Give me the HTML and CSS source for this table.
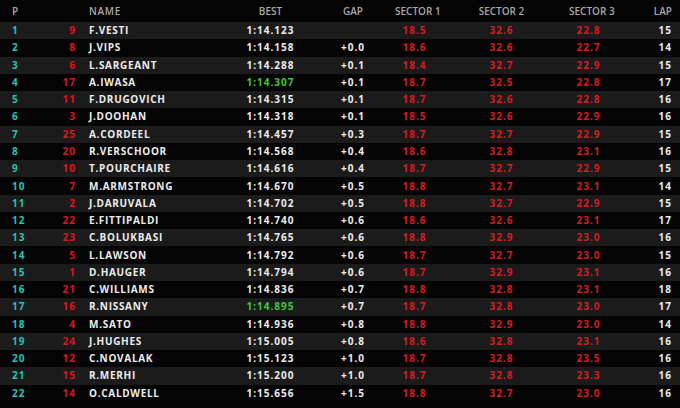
FILE: index.html
```html
<!DOCTYPE html>
<html>
<head>
<meta charset="utf-8">
<link rel="stylesheet" href="styles.css">
</head>
<body>
<div class="board">
  <div class="row head">
    <div class="c-p">P</div><div class="c-n"></div><div class="c-name">NAME</div><div class="c-best">BEST</div><div class="c-gap">GAP</div><div class="c-s1">SECTOR 1</div><div class="c-s2">SECTOR 2</div><div class="c-s3">SECTOR 3</div><div class="c-lap">LAP</div>
  </div>
  <div class="row"><div class="c-p">1</div><div class="c-n">9</div><div class="c-name">F.VESTI</div><div class="c-best">1:14.123</div><div class="c-gap"></div><div class="c-s1">18.5</div><div class="c-s2">32.6</div><div class="c-s3">22.8</div><div class="c-lap">15</div></div>
  <div class="row"><div class="c-p">2</div><div class="c-n">8</div><div class="c-name">J.VIPS</div><div class="c-best">1:14.158</div><div class="c-gap">+0.0</div><div class="c-s1">18.6</div><div class="c-s2">32.6</div><div class="c-s3">22.7</div><div class="c-lap">14</div></div>
  <div class="row"><div class="c-p">3</div><div class="c-n">6</div><div class="c-name">L.SARGEANT</div><div class="c-best">1:14.288</div><div class="c-gap">+0.1</div><div class="c-s1">18.4</div><div class="c-s2">32.7</div><div class="c-s3">22.9</div><div class="c-lap">15</div></div>
  <div class="row"><div class="c-p">4</div><div class="c-n">17</div><div class="c-name">A.IWASA</div><div class="c-best green">1:14.307</div><div class="c-gap">+0.1</div><div class="c-s1">18.7</div><div class="c-s2">32.5</div><div class="c-s3">22.8</div><div class="c-lap">17</div></div>
  <div class="row"><div class="c-p">5</div><div class="c-n">11</div><div class="c-name">F.DRUGOVICH</div><div class="c-best">1:14.315</div><div class="c-gap">+0.1</div><div class="c-s1">18.7</div><div class="c-s2">32.6</div><div class="c-s3">22.8</div><div class="c-lap">16</div></div>
  <div class="row"><div class="c-p">6</div><div class="c-n">3</div><div class="c-name">J.DOOHAN</div><div class="c-best">1:14.318</div><div class="c-gap">+0.1</div><div class="c-s1">18.5</div><div class="c-s2">32.6</div><div class="c-s3">22.9</div><div class="c-lap">16</div></div>
  <div class="row"><div class="c-p">7</div><div class="c-n">25</div><div class="c-name">A.CORDEEL</div><div class="c-best">1:14.457</div><div class="c-gap">+0.3</div><div class="c-s1">18.7</div><div class="c-s2">32.7</div><div class="c-s3">22.9</div><div class="c-lap">15</div></div>
  <div class="row"><div class="c-p">8</div><div class="c-n">20</div><div class="c-name">R.VERSCHOOR</div><div class="c-best">1:14.568</div><div class="c-gap">+0.4</div><div class="c-s1">18.6</div><div class="c-s2">32.8</div><div class="c-s3">23.1</div><div class="c-lap">16</div></div>
  <div class="row"><div class="c-p">9</div><div class="c-n">10</div><div class="c-name">T.POURCHAIRE</div><div class="c-best">1:14.616</div><div class="c-gap">+0.4</div><div class="c-s1">18.7</div><div class="c-s2">32.7</div><div class="c-s3">22.9</div><div class="c-lap">15</div></div>
  <div class="row"><div class="c-p">10</div><div class="c-n">7</div><div class="c-name">M.ARMSTRONG</div><div class="c-best">1:14.670</div><div class="c-gap">+0.5</div><div class="c-s1">18.8</div><div class="c-s2">32.7</div><div class="c-s3">23.1</div><div class="c-lap">14</div></div>
  <div class="row"><div class="c-p">11</div><div class="c-n">2</div><div class="c-name">J.DARUVALA</div><div class="c-best">1:14.702</div><div class="c-gap">+0.5</div><div class="c-s1">18.8</div><div class="c-s2">32.7</div><div class="c-s3">22.9</div><div class="c-lap">15</div></div>
  <div class="row"><div class="c-p">12</div><div class="c-n">22</div><div class="c-name">E.FITTIPALDI</div><div class="c-best">1:14.740</div><div class="c-gap">+0.6</div><div class="c-s1">18.6</div><div class="c-s2">32.6</div><div class="c-s3">23.1</div><div class="c-lap">17</div></div>
  <div class="row"><div class="c-p">13</div><div class="c-n">23</div><div class="c-name">C.BOLUKBASI</div><div class="c-best">1:14.765</div><div class="c-gap">+0.6</div><div class="c-s1">18.8</div><div class="c-s2">32.9</div><div class="c-s3">23.0</div><div class="c-lap">16</div></div>
  <div class="row"><div class="c-p">14</div><div class="c-n">5</div><div class="c-name">L.LAWSON</div><div class="c-best">1:14.792</div><div class="c-gap">+0.6</div><div class="c-s1">18.7</div><div class="c-s2">32.7</div><div class="c-s3">23.0</div><div class="c-lap">15</div></div>
  <div class="row"><div class="c-p">15</div><div class="c-n">1</div><div class="c-name">D.HAUGER</div><div class="c-best">1:14.794</div><div class="c-gap">+0.6</div><div class="c-s1">18.7</div><div class="c-s2">32.9</div><div class="c-s3">23.1</div><div class="c-lap">16</div></div>
  <div class="row"><div class="c-p">16</div><div class="c-n">21</div><div class="c-name">C.WILLIAMS</div><div class="c-best">1:14.836</div><div class="c-gap">+0.7</div><div class="c-s1">18.8</div><div class="c-s2">32.8</div><div class="c-s3">23.1</div><div class="c-lap">18</div></div>
  <div class="row"><div class="c-p">17</div><div class="c-n">16</div><div class="c-name">R.NISSANY</div><div class="c-best green">1:14.895</div><div class="c-gap">+0.7</div><div class="c-s1">18.7</div><div class="c-s2">32.8</div><div class="c-s3">23.0</div><div class="c-lap">17</div></div>
  <div class="row"><div class="c-p">18</div><div class="c-n">4</div><div class="c-name">M.SATO</div><div class="c-best">1:14.936</div><div class="c-gap">+0.8</div><div class="c-s1">18.8</div><div class="c-s2">32.9</div><div class="c-s3">23.0</div><div class="c-lap">14</div></div>
  <div class="row"><div class="c-p">19</div><div class="c-n">24</div><div class="c-name">J.HUGHES</div><div class="c-best">1:15.005</div><div class="c-gap">+0.8</div><div class="c-s1">18.6</div><div class="c-s2">32.8</div><div class="c-s3">23.1</div><div class="c-lap">16</div></div>
  <div class="row"><div class="c-p">20</div><div class="c-n">12</div><div class="c-name">C.NOVALAK</div><div class="c-best">1:15.123</div><div class="c-gap">+1.0</div><div class="c-s1">18.7</div><div class="c-s2">32.8</div><div class="c-s3">23.5</div><div class="c-lap">16</div></div>
  <div class="row"><div class="c-p">21</div><div class="c-n">15</div><div class="c-name">R.MERHI</div><div class="c-best">1:15.200</div><div class="c-gap">+1.0</div><div class="c-s1">18.7</div><div class="c-s2">32.8</div><div class="c-s3">23.3</div><div class="c-lap">16</div></div>
  <div class="row"><div class="c-p">22</div><div class="c-n">14</div><div class="c-name">O.CALDWELL</div><div class="c-best">1:15.656</div><div class="c-gap">+1.5</div><div class="c-s1">18.8</div><div class="c-s2">32.7</div><div class="c-s3">23.0</div><div class="c-lap">16</div></div>
</div>
</body>
</html>
```
FILE: styles.css
```css
html, body {
  margin: 0;
  padding: 0;
  background: #040404;
}
body {
  width: 680px;
  height: 408px;
  overflow: hidden;
  font-family: "Open Sans", "Noto Sans", sans-serif;
}
.board {
  display: flex;
  flex-direction: column;
}
.row {
  display: grid;
  grid-template-columns: 50px 25px 155px 81px 84px 39px 135px 39px 72px;
  height: 17.27px;
  align-items: center;
  font-size: 10px;
  font-weight: 700;
  letter-spacing: 1px;
  line-height: 17px;
  color: #ececec;
  white-space: nowrap;
}
.row:nth-child(even) {
  background: #1b1b1b;
}
.row.head {
  height: 22px;
  line-height: 22px;
  color: #a8a8a8;
  font-weight: 600;
  letter-spacing: 0;
}
.c-p {
  padding-left: 12px;
  color: #26c2bb;
}
.head .c-p { color: #a8a8a8; }
.c-n {
  text-align: right;
  color: #e0141c;
  margin-right: -1px;
}
.c-name {
  padding-left: 14px;
  letter-spacing: 0.7px;
}
.c-best, .c-gap, .c-s1, .c-s2, .c-s3 {
  text-align: center;
}
.c-s1, .c-s2, .c-s3 {
  color: #d81b1f;
  overflow: visible;
}
.head .c-s1, .head .c-s2, .head .c-s3 { color: #a8a8a8; }
.c-lap {
  text-align: right;
  padding-right: 8px;
}
.green {
  color: #3acb3a;
}
```
